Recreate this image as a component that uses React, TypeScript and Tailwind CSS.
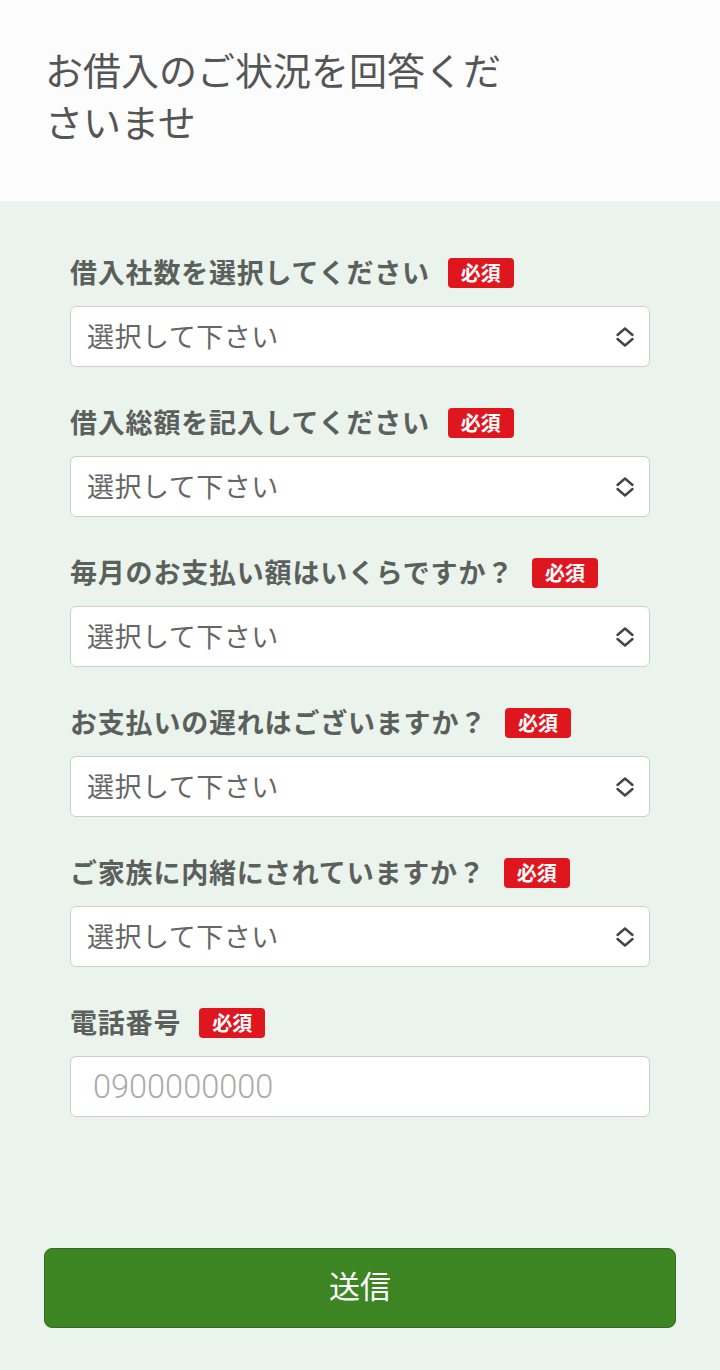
import React from "react";

const FONT = { fontFamily: '"Noto Sans CJK JP", "Noto Sans", sans-serif' };

const questions = [
  "借入社数を選択してください",
  "借入総額を記入してください",
  "毎月のお支払い額はいくらですか？",
  "お支払いの遅れはございますか？",
  "ご家族に内緒にされていますか？",
];

function Required() {
  return (
    <span className="inline-flex h-[30px] w-[66px] items-center justify-center rounded-[4px] bg-[#e0161f] text-[20px] font-bold leading-none text-white">
      必須
    </span>
  );
}

function Label({ text }: { text: string }) {
  return (
    <div className="flex h-[30px] items-center gap-[18px]">
      <span className="-mt-[4px] text-[27px] font-bold leading-none tracking-[0.8px] text-[#5b605c]">{text}</span>
      <Required />
    </div>
  );
}

function Chevrons() {
  return (
    <svg width="20" height="24" viewBox="0 0 20 24" fill="none" stroke="#444" strokeWidth="2.4" strokeLinecap="round" strokeLinejoin="round">
      <path d="M2.5 10 L10 3.5 L17.5 10" />
      <path d="M2.5 14 L10 20.5 L17.5 14" />
    </svg>
  );
}

export default function App() {
  return (
    <div className="min-h-[1370px] bg-[#ebf3ed]" style={FONT}>
      {/* タイトル */}
      <div className="h-[201px] bg-[#fcfcfc] pl-[45px] pt-[43px]">
        <h1 className="w-[470px] text-[38px] font-normal leading-[52px] text-[#555555]">
          お借入のご状況を回答くださいませ
        </h1>
      </div>

      {/* フォーム */}
      <form className="px-[70px] pt-[57px]">
        {questions.map((q) => (
          <div key={q} className="mb-[41px]">
            <Label text={q} />
            <div className="relative mt-[18px]">
              <select
                defaultValue=""
                className="h-[61px] w-full appearance-none rounded-[6px] border border-[#cdcfcd] bg-white pl-[16px] text-[27px] tracking-[0.5px] text-[#666666] outline-none"
                style={FONT}
              >
                <option value="">選択して下さい</option>
              </select>
              <div className="pointer-events-none absolute right-[15px] top-1/2 -translate-y-1/2">
                <Chevrons />
              </div>
            </div>
          </div>
        ))}

        <div>
          <Label text="電話番号" />
          <input
            type="tel"
            placeholder="0900000000"
            className="mt-[18px] h-[61px] w-full rounded-[6px] border border-[#cdcfcd] bg-white pl-[22px] text-[32.5px] font-light text-[#444] outline-none placeholder:text-[#ababab]"
            style={{ fontFamily: 'Roboto, "Noto Sans CJK JP", sans-serif' }}
          />
        </div>
      </form>

      <div className="px-[44px] pt-[131px] pb-[44px]">
        <button
          type="button"
          className="h-[80px] w-full rounded-[8px] border border-[#336f1e] bg-[#3d8523] pb-[6px] text-[31px] font-normal text-white"
          style={FONT}
        >
          送信
        </button>
      </div>
    </div>
  );
}
